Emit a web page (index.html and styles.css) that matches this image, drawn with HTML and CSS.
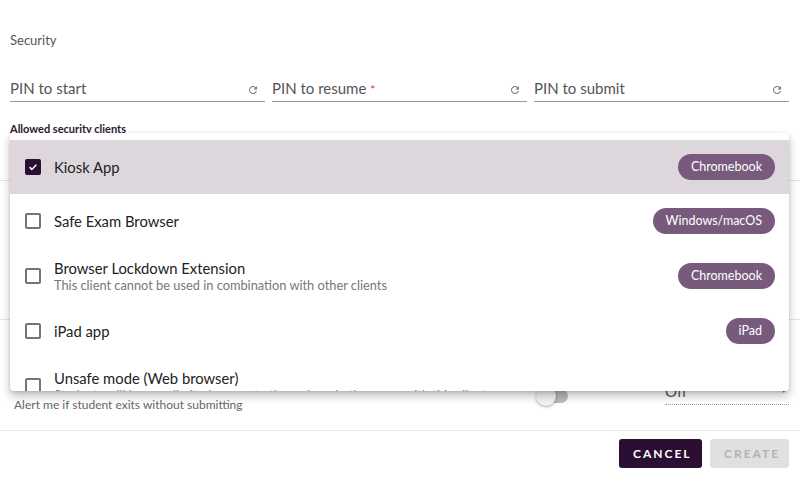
FILE: index.html
```html
<!DOCTYPE html>
<html lang="en">
<head>
  <meta charset="UTF-8" />
  <meta name="viewport" content="width=device-width, initial-scale=1" />
  <title>Security settings</title>
  <link rel="stylesheet" href="styles.css">
</head>
<body>
  <div class="dialog">
    <div class="content">
      <div class="section-title">Security</div>

      <div class="pin-row">
        <div class="field">
          <span class="field-label">PIN to start</span>
          <svg class="refresh" viewBox="0 0 24 24"><path d="M17.65 6.35C16.2 4.9 14.21 4 12 4c-4.42 0-7.99 3.58-7.99 8s3.57 8 7.99 8c3.73 0 6.84-2.55 7.73-6h-2.08c-.82 2.33-3.04 4-5.65 4-3.31 0-6-2.69-6-6s2.69-6 6-6c1.66 0 3.14.69 4.22 1.78L13 11h7V4l-2.35 2.35z"/></svg>
        </div>
        <div class="field">
          <span class="field-label">PIN to resume <span class="req">*</span></span>
          <svg class="refresh" viewBox="0 0 24 24"><path d="M17.65 6.35C16.2 4.9 14.21 4 12 4c-4.42 0-7.99 3.58-7.99 8s3.57 8 7.99 8c3.73 0 6.84-2.55 7.73-6h-2.08c-.82 2.33-3.04 4-5.65 4-3.31 0-6-2.69-6-6s2.69-6 6-6c1.66 0 3.14.69 4.22 1.78L13 11h7V4l-2.35 2.35z"/></svg>
        </div>
        <div class="field">
          <span class="field-label">PIN to submit</span>
          <svg class="refresh" viewBox="0 0 24 24"><path d="M17.65 6.35C16.2 4.9 14.21 4 12 4c-4.42 0-7.99 3.58-7.99 8s3.57 8 7.99 8c3.73 0 6.84-2.55 7.73-6h-2.08c-.82 2.33-3.04 4-5.65 4-3.31 0-6-2.69-6-6s2.69-6 6-6c1.66 0 3.14.69 4.22 1.78L13 11h7V4l-2.35 2.35z"/></svg>
        </div>
      </div>

      <div class="clients-label">Allowed security clients</div>
    </div>

    <!-- rows hidden under the open menu -->
    <div class="bg-row bg-select"></div>
    <div class="bg-row bg-tall"></div>

    <div class="content">
      <div class="alert-row">
        <span class="alert-text">Alert me if student exits without submitting</span>
        <span class="toggle"><span class="thumb"></span></span>
        <span class="mini-select">Off <span class="caret">&#9662;</span></span>
      </div>
    </div>

    <div class="footer">
      <button class="btn btn-primary">CANCEL</button>
      <button class="btn btn-disabled">CREATE</button>
    </div>

    <ul class="menu">
      <li class="option selected">
        <span class="check on"><svg viewBox="0 0 16 16"><path d="M3.5 8.2l3 3 6-6.2" /></svg></span>
        <div class="option-text"><div class="option-title">Kiosk App</div></div>
        <span class="badge">Chromebook</span>
      </li>
      <li class="option">
        <span class="check"></span>
        <div class="option-text"><div class="option-title">Safe Exam Browser</div></div>
        <span class="badge">Windows/macOS</span>
      </li>
      <li class="option two-line">
        <span class="check"></span>
        <div class="option-text">
          <div class="option-title">Browser Lockdown Extension</div>
          <div class="option-sub">This client cannot be used in combination with other clients</div>
        </div>
        <span class="badge">Chromebook</span>
      </li>
      <li class="option">
        <span class="check"></span>
        <div class="option-text"><div class="option-title">iPad app</div></div>
        <span class="badge">iPad</span>
      </li>
      <li class="option two-line">
        <span class="check"></span>
        <div class="option-text">
          <div class="option-title">Unsafe mode (Web browser)</div>
          <div class="option-sub">Students will have unlimited access to the web and other apps with this client</div>
        </div>
      </li>
    </ul>
  </div>
</body>
</html>
```

FILE: styles.css
```css
body {
  margin: 0;
  font-family: Lato, "Open Sans", sans-serif;
  color: #222;
  background: #fff;
}
.dialog {
  position: relative;
  width: 800px;
  height: 500px;
  overflow: hidden;
}
.content {
  padding: 0 10px;
}
.section-title {
  margin-top: 32px;
  font-size: 13px;
  line-height: 16px;
  color: #555;
}
.pin-row {
  margin-top: 28px;
  display: grid;
  grid-template-columns: 255px 255px 255px;
  gap: 0 7px;
}
.field {
  display: flex;
  align-items: center;
  justify-content: space-between;
  height: 24px;
  padding-bottom: 1px;
  border-bottom: 1px solid #9a9a9a;
  font-size: 15px;
  color: #555;
}
.req {
  color: #c0392b;
  font-size: 12px;
}
.refresh {
  width: 12px;
  height: 12px;
  fill: #777;
  margin: 4px 6px 0 0;
}
.clients-label {
  margin-top: 21px;
  font-size: 11px;
  font-weight: bold;
  line-height: 12px;
  color: #2b1a30;
}
.bg-row {
  border-bottom: 1px solid #e4e4e4;
}
.bg-select {
  height: 45px;
}
.bg-tall {
  height: 138px;
}
.alert-row {
  position: relative;
  height: 110px;
  font-size: 12px;
  color: #666;
}
.alert-text {
  position: absolute;
  left: 4px;
  top: 77px;
}
.toggle {
  position: absolute;
  left: 528px;
  top: 69px;
  width: 30px;
  height: 14px;
  border-radius: 7px;
  background: #bbb;
}
.thumb {
  position: absolute;
  left: -2px;
  top: -3px;
  width: 20px;
  height: 20px;
  border-radius: 50%;
  background: #f4f4f4;
  box-shadow: 0 1px 3px rgba(0,0,0,0.35);
}
.mini-select {
  position: absolute;
  left: 655px;
  top: 62px;
  width: 124px;
  height: 22px;
  border-bottom: 1px dotted #999;
  font-size: 15px;
  color: #555;
}
.caret {
  position: absolute;
  right: 2px;
  font-size: 11px;
}
.footer {
  border-top: 1px solid #e6e6e6;
  display: flex;
  justify-content: flex-end;
  gap: 8px;
  padding: 8px 11px 0 0;
}
.btn {
  height: 29px;
  border: none;
  border-radius: 3px;
  font-family: Lato, sans-serif;
  font-size: 12px;
  font-weight: bold;
  letter-spacing: 2px;
  padding: 0 14px;
}
.btn-primary {
  width: 83px;
  background: #2b0f33;
  color: #fff;
}
.btn-disabled {
  width: 79px;
  background: #e0e0e0;
  color: #b3b3b3;
}
.menu {
  position: absolute;
  left: 10px;
  top: 133px;
  width: 779px;
  height: 258px;
  margin: 0;
  padding: 7px 0 0;
  list-style: none;
  background: #fff;
  border-radius: 4px;
  overflow: hidden;
  box-sizing: border-box;
  box-shadow: 0 5px 10px rgba(0,0,0,0.25), 0 1px 3px rgba(0,0,0,0.12);
}
.option {
  display: flex;
  align-items: center;
  height: 54px;
  padding: 0 14px 0 15px;
}
.option.two-line {
  height: 56px;
}
.option.selected {
  background: #ddd7dd;
}
.check {
  flex: none;
  width: 16px;
  height: 16px;
  box-sizing: border-box;
  border: 2px solid #757575;
  border-radius: 2px;
  margin-right: 13px;
}
.check.on {
  background: #2b0f33;
  border-color: #2b0f33;
}
.check svg {
  display: block;
  width: 12px;
  height: 12px;
  fill: none;
  stroke: #fff;
  stroke-width: 2;
}
.option-text {
  flex: 1;
  overflow: hidden;
}
.option-title {
  font-size: 14.8px;
  line-height: 18px;
  color: #222;
}
.option-sub {
  font-size: 12.8px;
  line-height: 16px;
  color: #777;
  white-space: nowrap;
}
.badge {
  flex: none;
  height: 26px;
  line-height: 26px;
  padding: 0 13px;
  border-radius: 13px;
  background: #785b7c;
  color: #fff;
  font-size: 12.5px;
}
```
